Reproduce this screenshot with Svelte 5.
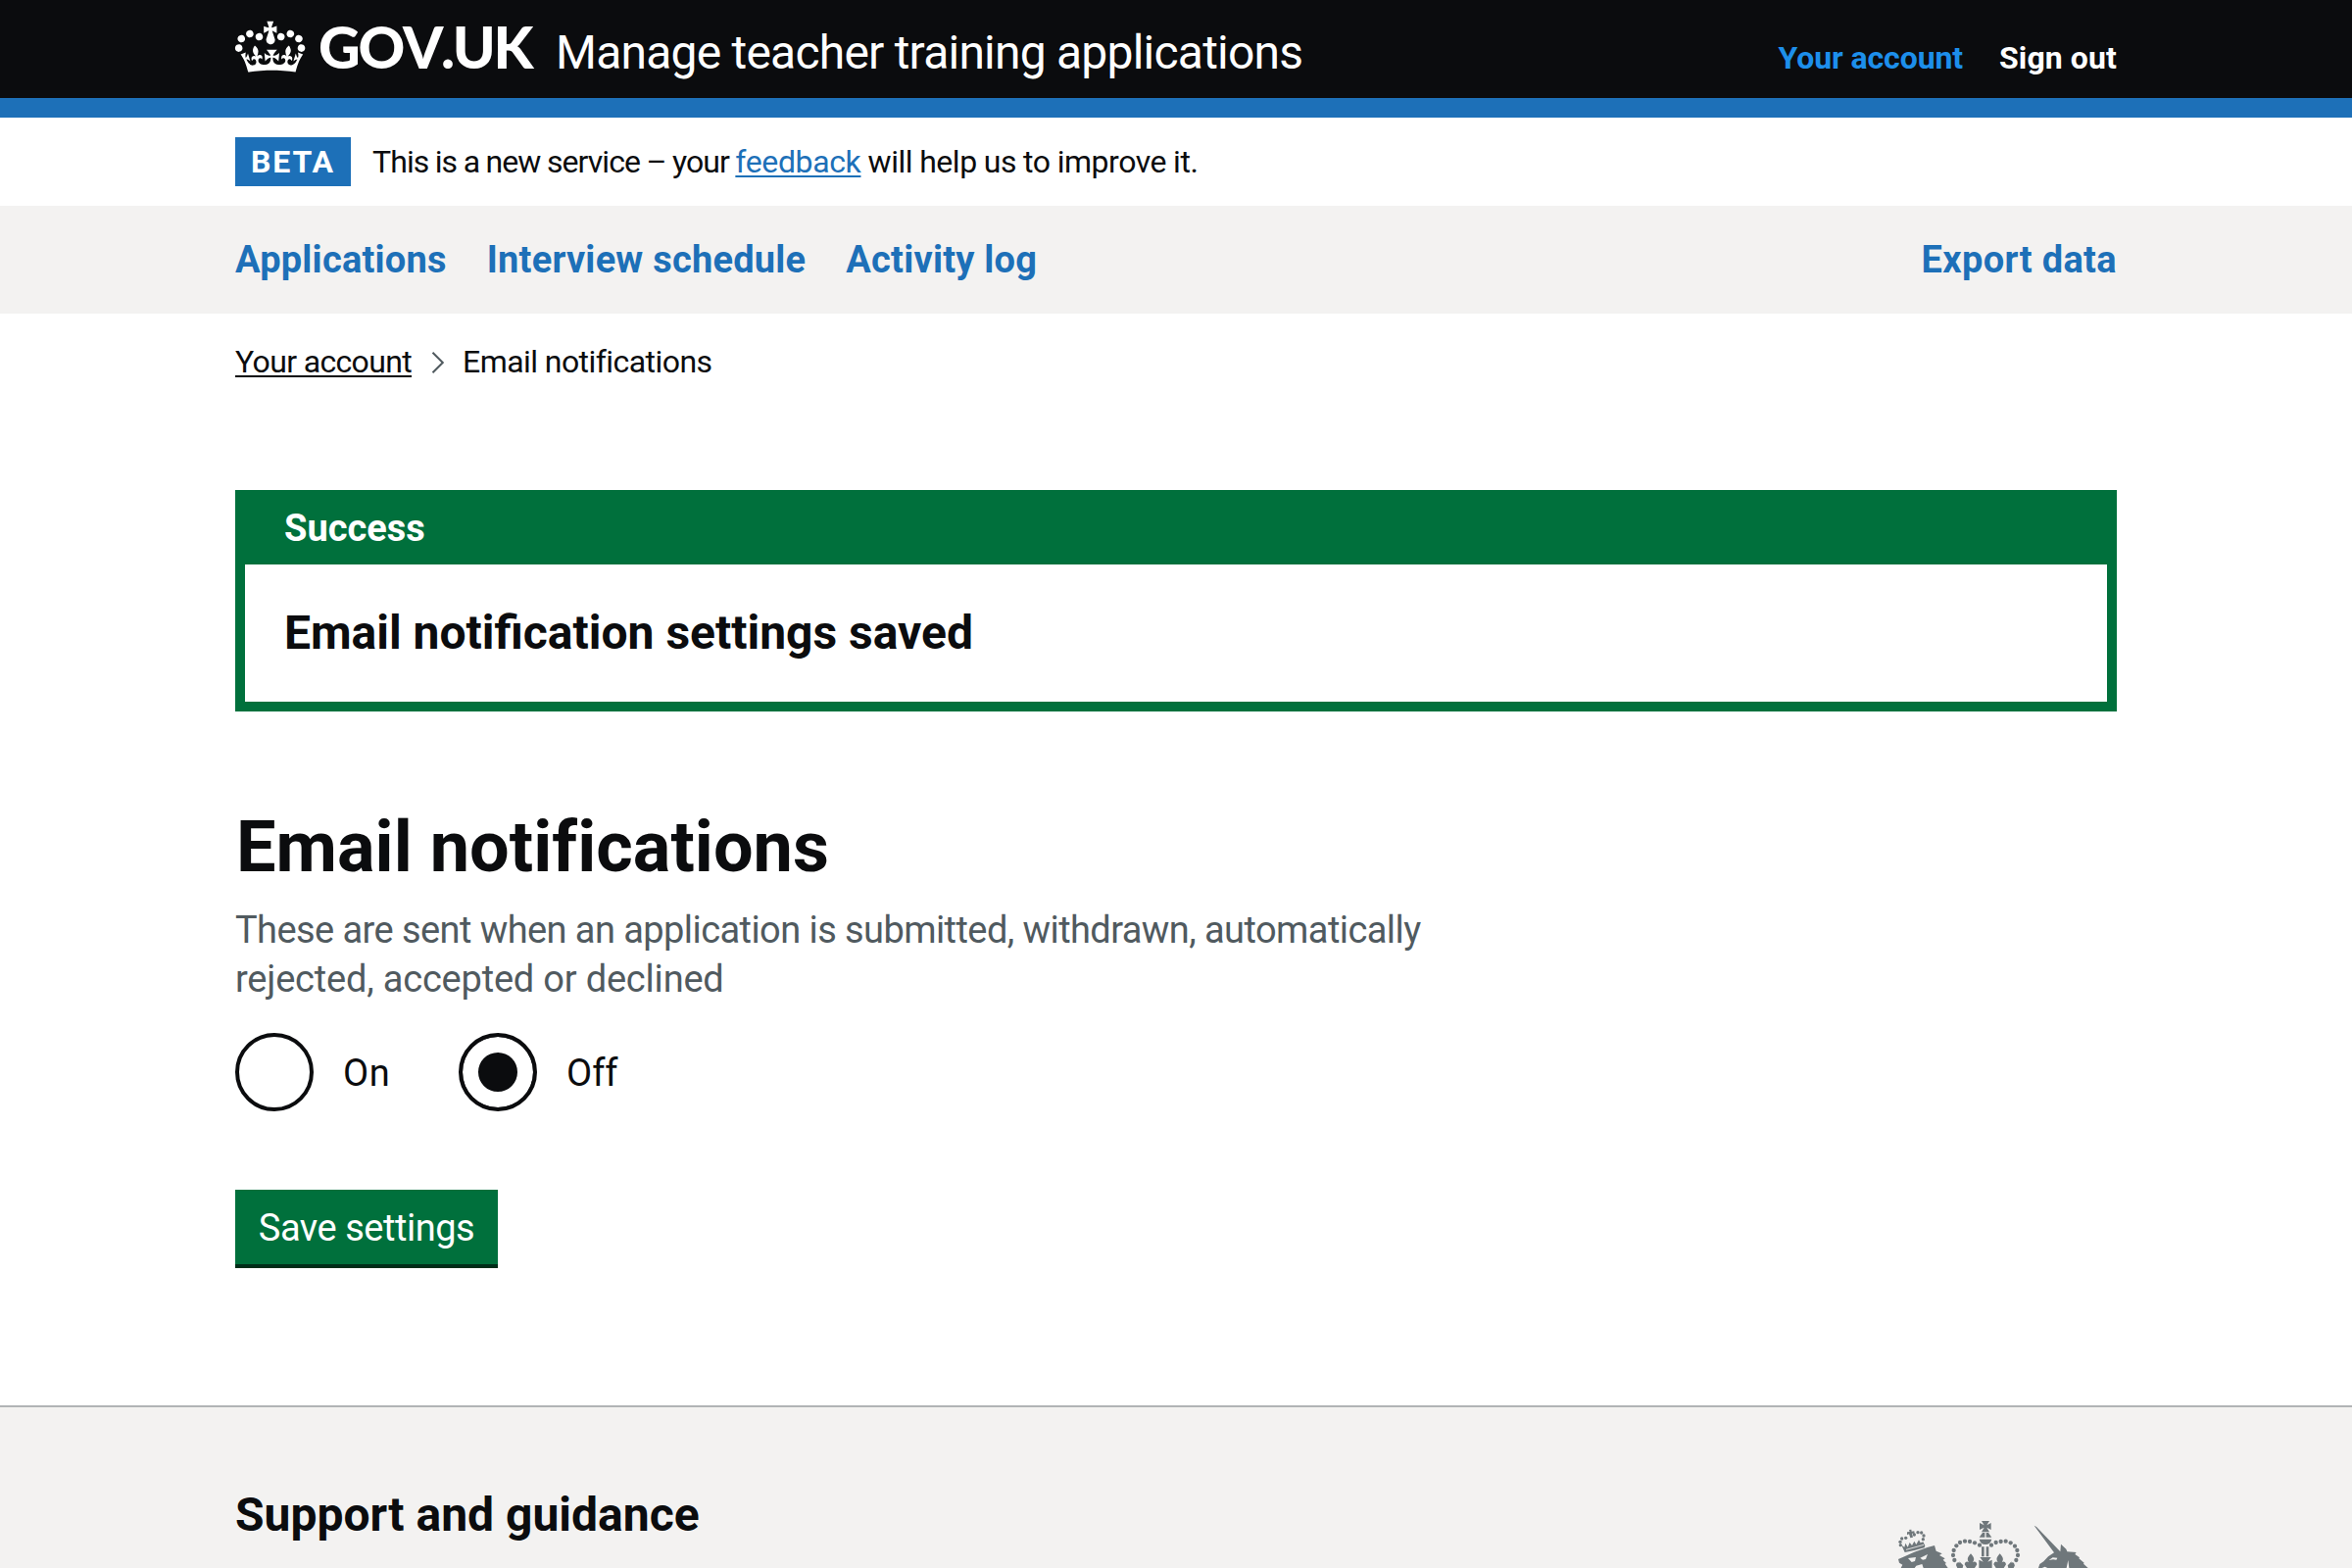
<script>
  let choice = $state('off');
  const nav = ['Applications', 'Interview schedule', 'Activity log'];
  const options = [
    { value: 'on', label: 'On' },
    { value: 'off', label: 'Off' }
  ];
  // Bead positions along the arches of the royal crown in the crest
  const beads = [
    [295, 229], [283, 216], [279, 201], [281, 186], [289, 172], [300, 162], [315, 158], [330, 159], [345, 163], [360, 170],
    [396, 170], [410, 162], [425, 159], [440, 158], [455, 163], [468, 173], [475, 186], [477, 201], [472, 216], [460, 229]
  ];
  const lionBeads = [[118, 170], [117, 160], [122, 150], [134, 148], [160, 138], [171, 131], [182, 132], [189, 141], [187, 152]];
</script>

<header class="top">
  <div class="wrap top-row">
    <svg class="crown" viewBox="0 -.3 36 28.5" width="72" height="57" aria-hidden="true">
      <path d="M6.7 12.2c1 .4 2.1-.1 2.5-1s-.1-2.1-1-2.5c-1-.4-2.1.1-2.5 1-.4 1 0 2.1 1 2.5m-4.3 2.5c1 .4 2.1-.1 2.5-1s-.1-2.1-1-2.5c-1-.4-2.1.1-2.5 1-.5 1 0 2.1 1 2.5m-1.3 4.8c1 .4 2.1-.1 2.5-1 .4-1-.1-2.1-1-2.5-1-.4-2.1.1-2.5 1-.4 1 0 2.1 1 2.5m10.4-5.8c1 .4 2.1-.1 2.5-1s-.1-2.1-1-2.5c-1-.4-2.1.1-2.5 1s0 2.1 1 2.5m17.4-1.5c-1 .4-2.1-.1-2.5-1s.1-2.1 1-2.5c1-.4 2.1.1 2.5 1 .5 1 0 2.1-1 2.5m4.3 2.5c-1 .4-2.1-.1-2.5-1s.1-2.1 1-2.5c1-.4 2.1.1 2.5 1 .5 1 0 2.1-1 2.5m1.3 4.8c-1 .4-2.1-.1-2.5-1-.4-1 .1-2.1 1-2.5 1-.4 2.1.1 2.5 1 .4 1 0 2.1-1 2.5m-10.4-5.8c-1 .4-2.1-.1-2.5-1s.1-2.1 1-2.5c1-.4 2.1.1 2.5 1s0 2.1-1 2.5m-5.3-4.9 2.4 1.3V6.5l-2.4.8c-.1-.1-.1-.2-.2-.2s1-3 1-3h-3.4l1 3c-.1.1-.2.1-.2.2-.1.1-2.4-.7-2.4-.7v3.5L17 8.8c.1.1.1.2.2.2l-1.3 4c-.1.2-.1.4-.1.6 0 1.1.8 2 1.9 2.2h.7c1.1-.2 1.9-1.1 1.9-2.1 0-.2 0-.4-.1-.6l-1.3-4c-.1-.2 0-.2.1-.3m-1 20.3c4.6 0 8.9.3 12.8.9 1.1-4.6 2.4-7.2 3.8-9.1l-2.6-.9c.3 1.3.3 1.9 0 2.7-.4-.4-.8-1.1-1.1-2.3l-1.2 4c.7-.5 1.3-.8 2-.9-1.1 2.5-2.6 3.1-3.5 3-1.1-.2-1.7-1.2-1.5-2.1.3-1.2 1.5-1.5 2.1-.1 1.1-2.3-.8-3-2-2.3 1.9-1.9 2.1-3.5.6-5.6-2.1 1.6-2.1 3.2-1.2 5.5-1.2-1.4-3.2-.6-2.5 1.6.9-1.4 2.1-.5 1.9.8-.2 1.1-1.7 2.1-3.5 1.9-2.7-.2-2.9-2.1-2.9-3.6.7-.1 1.9.5 2.9 1.9l.4-4.3c-1.1 1.1-2.1 1.4-3.2 1.4.4-1.2 2.1-3 2.1-3h-5.4s1.7 1.9 2.1 3c-1.1 0-2.1-.2-3.2-1.4l.4 4.3c1-1.4 2.2-2 2.9-1.9-.1 1.5-.2 3.4-2.9 3.6-1.9.2-3.4-.8-3.5-1.9-.2-1.3 1-2.2 1.9-.8.7-2.3-1.2-3-2.5-1.6.9-2.2.9-3.9-1.2-5.5-1.5 2-1.3 3.7.6 5.6-1.2-.7-3.1 0-2 2.3.6-1.4 1.8-1.1 2.1.1.2.9-.3 1.9-1.5 2.1-.9.2-2.4-.5-3.5-3 .6 0 1.2.3 2 .9l-1.2-4c-.3 1.1-.7 1.9-1.1 2.3-.3-.8-.2-1.4 0-2.7l-2.6.9c1.4 1.9 2.7 4.5 3.8 9.1 3.9-.6 8.2-.9 12.8-.9" />
    </svg>
    <span class="logo">GOV.UK</span>
    <span class="service">Manage teacher training applications</span>
    <nav class="account">
      <a class="current" href="#account">Your account</a>
      <a class="signout" href="#signout">Sign out</a>
    </nav>
  </div>
</header>

<div class="wrap phase">
  <strong class="tag">BETA</strong>
  <p><span class="lead">{'This is a new service – your '}</span><a href="#feedback">feedback</a><span class="tail">{' will help us to improve it.'}</span></p>
</div>

<nav class="primary">
  <div class="wrap primary-row">
    {#each nav as item}
      <a href="#nav">{item}</a>
    {/each}
    <a class="export" href="#export">Export data</a>
  </div>
</nav>

<main class="wrap">
  <div class="crumbs">
    <a href="#account">Your account</a>
    <svg class="chevron" viewBox="0 0 14 22" width="14" height="22" aria-hidden="true"><path d="M1.5 .7 11.8 11 1.5 21.3" /></svg>
    <span>Email notifications</span>
  </div>

  <section class="banner">
    <h2>Success</h2>
    <p>Email notification settings saved</p>
  </section>

  <h1>Email notifications</h1>
  <p class="hint">
    <span class="hint-a">These are sent when an application is submitted, withdrawn, automatically</span>
    <span class="hint-b">rejected, accepted or declined</span>
  </p>

  <div class="radios">
    {#each options as o}
      <label>
        <input type="radio" name="notify" value={o.value} bind:group={choice} />
        <span class={o.value}>{o.label}</span>
      </label>
    {/each}
  </div>

  <button type="button">Save settings</button>
</main>

<footer>
  <div class="wrap foot-row">
    <h2>Support and guidance</h2>
    <svg class="crest" viewBox="90 84 630 156" width="210" height="52" aria-hidden="true">
      <!-- lion -->
      {#each lionBeads as [x, y]}<circle cx={x} cy={y} r="5" />{/each}
      <path d="M138 130l8-1-2-6 7-1 1 6 8-1 1 8-8-1 3 12-8 2-4-12-6 3zM131 192l-10-22 9 6 3-12 7 12 6-14 7 9 7-13 6 10 8-14 5 9 8-3 6 12-2 6-30 8z" />
      <path class="cut" d="M135 184l54-15" />
      <path d="M111 213l19-8 30-14 40-14 22-6 5 17 18 8-8 5 17 10-6 4 10 10-4 2 9 13H119l5-10-10-6z" />
      <path class="hole" d="M141 210l24-3-3 12-10 3zM178 209l23-11-6 15-9 2zM161 240l5-7 18-5 4 12z" />
      <!-- royal crown -->
      {#each beads as [x, y]}<circle cx={x} cy={y} r="6.4" />{/each}
      <path d="M366 96h24l-8 13 13-7v21l-13-7 8 14h-24l8-14-14 7v-21l14 7zM369 132h7v14h-17zM380 132h7l10 14h-17zM359 152h38c-2 10-9 16-19 16s-17-6-19-16zM366 175h8v30h-8zM380 175h8v30h-8z" />
      <path d="M361 207h34l-10 14 13-6v25h-40v-25l13 6zM333 196c11 13 12 17 6 27 6-5 12-1 13 6l-7 11h-24l-7-11c1-7 7-11 13-6-6-10-5-14 6-27zM422 196c11 13 12 17 6 27 6-5 12-1 13 6l-7 11h-24l-7-11c1-7 7-11 13-6-6-10-5-14 6-27zM288 232l12-4-2-8 12 12-2 8h-16zM468 232l-12-4 2-8-12 12 2 8h16z" />
      <!-- unicorn -->
      <path d="M527 110l7 4 73 76 2-23 16 15 3 8 28 2-4 6 14 10-2 3 16 13-2 3 14 13H540l4-12 12-8 14-15 18-12z" />
      <path class="hole" d="M572 216l12-8 14 1-3 6-10-1zM631 216l-5 24h8zM551 240l9-4 8 4z" />
    </svg>
  </div>
</footer>

<style>
  :global(body) {
    background: #fff;
    color: #0b0c0e;
    font-family: Roboto, "Noto Sans", sans-serif;
    font-size: 38px;
    line-height: 50px;
  }
  :global(#app) {
    height: 1600px;
    overflow: hidden;
  }
  h1, h2, p { margin: 0; }
  a { color: #1d70b8; text-decoration: none; }
  .wrap { width: 1920px; margin: 0 auto; }

  .top { height: 100px; background: #0b0c0e; border-bottom: 20px solid #1d70b8; }
  .top-row { display: flex; align-items: baseline; padding-top: 13px; white-space: nowrap; }
  .crown { overflow: visible; fill: #fff; flex: none; }
  .logo {
    margin-left: 13px;
    width: 242px;
    color: #fff;
    font-family: Lato, sans-serif;
    font-weight: 900;
    font-size: 59px;
    line-height: 48px;
    font-kerning: none;
    letter-spacing: -2.3px;
  }
  .service { color: #fff; font-size: 48px; letter-spacing: -0.78px; }
  .account { display: flex; gap: 37px; margin-left: auto; font-size: 32px; font-weight: 700; }
  .account .current { color: #1d8feb; letter-spacing: -0.1px; }
  .account .signout { color: #fff; letter-spacing: 0.1px; }

  .phase { display: flex; align-items: center; height: 90px; font-size: 32px; }
  .tag {
    box-sizing: border-box;
    width: 118px;
    padding-left: 16px;
    background: #1d70b8;
    color: #fff;
    letter-spacing: 1.9px;
  }
  .phase p { margin-left: 22px; white-space: pre; }
  .lead { letter-spacing: -0.92px; word-spacing: -0.6px; }
  .tail { letter-spacing: -0.46px; word-spacing: -0.4px; }
  .phase a { letter-spacing: -0.37px; }
  .phase a, .crumbs a {
    text-decoration: underline;
    text-decoration-thickness: 2px;
    text-underline-offset: 3px;
    text-decoration-skip-ink: none;
  }

  .primary { background: #f3f2f1; }
  .primary-row { display: flex; align-items: center; gap: 41px; height: 110px; font-weight: 700; letter-spacing: 0.22px; }
  .export { margin-left: auto; letter-spacing: 0.35px; }

  .crumbs { display: flex; align-items: center; height: 40px; padding-top: 29px; font-size: 32px; }
  .crumbs a { color: #0b0c0e; letter-spacing: -0.65px; }
  .crumbs span { letter-spacing: -0.56px; }
  .chevron { margin: 1px 18px 0 20px; fill: none; stroke: #505a5f; stroke-width: 2; }

  .banner { margin-top: 111px; border: 10px solid #00703c; }
  .banner h2 { padding: 4px 40px 12px; background: #00703c; color: #fff; font-size: 38px; }
  .banner p { padding: 40px; font-size: 48px; line-height: 60px; font-weight: 700; }

  h1 { margin-top: 99px; padding-left: 1px; font-size: 72px; line-height: 80px; letter-spacing: 0.05px; }
  .hint { margin-top: 19px; color: #505a5f; white-space: nowrap; }
  .hint span { display: block; }
  .hint-a { letter-spacing: -0.575px; }
  .hint-b { letter-spacing: -0.2px; }

  .radios { display: grid; grid-template-columns: 228px auto; justify-content: start; margin-top: 30px; }
  label { display: flex; align-items: center; gap: 30px; height: 80px; }
  label span { padding-top: 1px; }
  .on { letter-spacing: 0.6px; }
  input {
    appearance: none;
    box-sizing: border-box;
    width: 80px;
    height: 80px;
    margin: 0;
    border: 4px solid #0b0c0e;
    border-radius: 50%;
    background: #fff;
  }
  input:checked { background: #0b0c0e; box-shadow: inset 0 0 0 16px #fff; }

  button {
    display: block;
    box-sizing: border-box;
    width: 268px;
    height: 76px;
    margin: 80px 0 144px;
    padding: 1px 0 0;
    border: 0;
    background: #00703c;
    box-shadow: 0 4px 0 #002d18;
    color: #fff;
    font: inherit;
    letter-spacing: -0.47px;
  }

  footer { height: 400px; border-top: 2px solid #b1b4b6; background: #f3f2f1; }
  .foot-row { display: flex; justify-content: space-between; align-items: flex-start; padding-top: 80px; }
  footer h2 { font-size: 48px; line-height: 60px; }
  .crest { margin: 32px 20px 0 0; fill: #6f777b; }
  .cut { fill: none; stroke: #f3f2f1; stroke-width: 2.5; }
  .hole { fill: #f3f2f1; }
</style>
